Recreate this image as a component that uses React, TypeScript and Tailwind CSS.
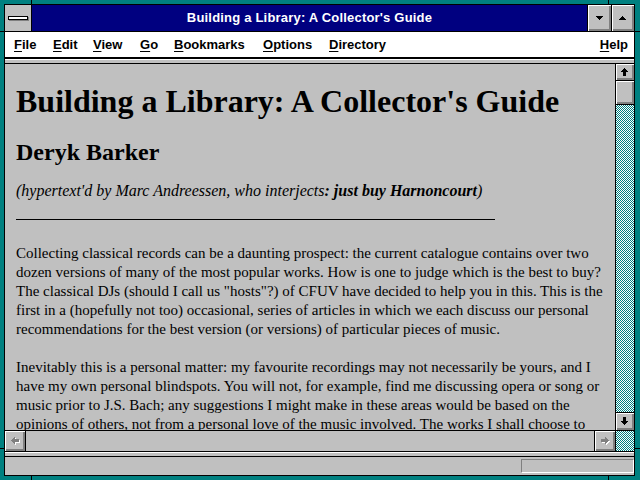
import React from "react";

const serif = "font-['Liberation_Serif','Times_New_Roman',serif]";
const sans = "font-['Liberation_Sans',Arial,sans-serif]";

type Rect = [number, number, number, number];

// pixel arrows, drawn as rows of rects so they stay crisp
const UP: Rect[] = [[3, 0, 1, 1], [2, 1, 3, 1], [1, 2, 5, 1], [0, 3, 7, 1], [2, 4, 3, 4]];
const DOWN: Rect[] = [[2, 0, 3, 4], [0, 4, 7, 1], [1, 5, 5, 1], [2, 6, 3, 1], [3, 7, 1, 1]];
const LEFT: Rect[] = [[0, 3, 1, 1], [1, 2, 1, 3], [2, 1, 1, 5], [3, 0, 1, 7], [4, 2, 4, 3]];
const RIGHT: Rect[] = [[7, 3, 1, 1], [6, 2, 1, 3], [5, 1, 1, 5], [4, 0, 1, 7], [0, 2, 4, 3]];
const TRI_DOWN: Rect[] = [[0, 0, 7, 1], [1, 1, 5, 1], [2, 2, 3, 1], [3, 3, 1, 1]];
const TRI_UP: Rect[] = [[3, 0, 1, 1], [2, 1, 3, 1], [1, 2, 5, 1], [0, 3, 7, 1]];

function Glyph({ rects, w, h, color = "#000", disabled = false }: { rects: Rect[]; w: number; h: number; color?: string; disabled?: boolean }) {
  return (
    <svg width={w + 1} height={h + 1} viewBox={`0 0 ${w + 1} ${h + 1}`} shapeRendering="crispEdges">
      {disabled &&
        rects.map(([x, y, rw, rh], i) => <rect key={"s" + i} x={x + 1} y={y + 1} width={rw} height={rh} fill="#ffffff" />)}
      {rects.map(([x, y, rw, rh], i) => (
        <rect key={i} x={x} y={y} width={rw} height={rh} fill={disabled ? "#808080" : color} />
      ))}
    </svg>
  );
}

const bevel =
  "bg-[#c0c0c0] shadow-[inset_1px_1px_0_#ffffff,inset_-1px_-1px_0_#808080,inset_-2px_-2px_0_#808080] flex items-center justify-center";

const checker =
  "bg-[conic-gradient(#008080_90deg,#ffffff_90deg_180deg,#008080_180deg_270deg,#ffffff_270deg)] bg-[length:2px_2px]";

function TitleBar() {
  return (
    <div className="h-[27px] flex border-b border-black shrink-0">
      <div className="w-[27px] border-r border-black bg-[#c0c0c0] flex items-center justify-center">
        <div className="w-[20px] h-[4px] border border-black bg-white shadow-[1px_1px_0_#808080] -mt-[1px]" />
      </div>
      <div className={`flex-1 bg-[#000080] text-white text-[13px] tracking-[0.2px] font-bold flex items-center justify-center ${sans}`}>
        Building a Library: A Collector's Guide
      </div>
      <div className={`w-[24px] border-l border-black ${bevel}`}>
        <Glyph rects={TRI_DOWN} w={7} h={4} />
      </div>
      <div className={`w-[23px] border-l border-black ${bevel}`}>
        <Glyph rects={TRI_UP} w={7} h={4} />
      </div>
    </div>
  );
}

const menus: { label: string; w: string }[] = [
  { label: "File", w: "w-[39px]" },
  { label: "Edit", w: "w-[40px]" },
  { label: "View", w: "w-[47px]" },
  { label: "Go", w: "w-[34px]" },
  { label: "Bookmarks", w: "w-[89px]" },
  { label: "Options", w: "w-[66px]" },
  { label: "Directory", w: "w-[80px]" },
];

function MenuLabel({ label }: { label: string }) {
  return (
    <span>
      <span className="underline underline-offset-[2px]">{label[0]}</span>
      {label.slice(1)}
    </span>
  );
}

function MenuBar() {
  return (
    <div className={`h-[26px] bg-white border-b border-black flex items-center pl-[9px] pr-[6px] text-[13px] font-bold text-black shrink-0 ${sans}`}>
      {menus.map((m) => (
        <div key={m.label} className={`${m.w} shrink-0`}>
          <MenuLabel label={m.label} />
        </div>
      ))}
      <div className="flex-1" />
      <MenuLabel label="Help" />
    </div>
  );
}

const para1 = [
  "Collecting classical records can be a daunting prospect: the current catalogue contains over two",
  "dozen versions of many of the most popular works. How is one to judge which is the best to buy?",
  "The classical DJs (should I call us \"hosts\"?) of CFUV have decided to help you in this. This is the",
  "first in a (hopefully not too) occasional, series of articles in which we each discuss our personal",
  "recommendations for the best version (or versions) of particular pieces of music.",
];

const para2 = [
  "Inevitably this is a personal matter: my favourite recordings may not necessarily be yours, and I",
  "have my own personal blindspots. You will not, for example, find me discussing opera or song or",
  "music prior to J.S. Bach; any suggestions I might make in these areas would be based on the",
  "opinions of others, not from a personal love of the music involved. The works I shall choose to",
];

function Content() {
  return (
    <div className={`flex-1 overflow-hidden pl-[11px] text-black ${serif}`}>
      <h1 className="mt-[19px] text-[32px] leading-[37px] font-bold whitespace-nowrap">
        Building a Library: A Collector's Guide
      </h1>
      <h2 className="mt-[18px] text-[24px] leading-[28px] font-bold">Deryk Barker</h2>
      <p className="mt-[15px] text-[16px] leading-[19px] italic whitespace-nowrap">
        (hypertext'd by Marc Andreessen, who interjects<b>: just buy Harnoncourt</b>)
      </p>
      <div className="mt-[19px] w-[479px] h-px bg-black" />
      <div className="mt-[24px] text-[15px] leading-[19px] whitespace-nowrap">
        {para1.map((l) => (
          <div key={l}>{l}</div>
        ))}
      </div>
      <div className="mt-[19px] text-[15px] leading-[19px] whitespace-nowrap">
        {para2.map((l) => (
          <div key={l}>{l}</div>
        ))}
      </div>
    </div>
  );
}

function VScroll() {
  return (
    <div className="w-[19px] border-l border-black flex flex-col shrink-0">
      <div className={`h-[17px] border-b border-black ${bevel}`}>
        <Glyph rects={UP} w={7} h={8} />
      </div>
      <div className={`h-[24px] border-b border-black ${bevel}`} />
      <div className={`flex-1 ${checker}`} />
      <div className={`h-[18px] border-t border-black ${bevel}`}>
        <Glyph rects={DOWN} w={7} h={8} />
      </div>
    </div>
  );
}

function HScroll() {
  return (
    <div className="h-[22px] border-y border-black flex shrink-0">
      <div className={`w-[21px] border-r border-black ${bevel}`}>
        <Glyph rects={LEFT} w={8} h={7} disabled />
      </div>
      <div className="flex-1 bg-[#c0c0c0]" />
      <div className={`w-[21px] border-l border-black ${bevel}`}>
        <Glyph rects={RIGHT} w={8} h={7} disabled />
      </div>
      <div className={`w-[19px] border-l border-black ${checker}`} />
    </div>
  );
}

function StatusBar() {
  return (
    <div className="h-[18px] bg-[#c0c0c0] flex items-center justify-end shrink-0">
      <div className="w-[113px] h-[14px] border-t border-l border-[#808080] border-b border-r border-b-white border-r-white" />
    </div>
  );
}

export default function App() {
  return (
    <div className="relative w-[640px] h-[480px] bg-[#008080] pt-[4px] pb-[4px] pl-[4px] pr-[5px]">
      {/* resize segments on the frame */}
      <div className="absolute left-[31px] top-0 w-px h-[4px] bg-black" />
      <div className="absolute left-[608px] top-0 w-px h-[4px] bg-black" />
      <div className="absolute left-[31px] bottom-0 w-px h-[4px] bg-black" />
      <div className="absolute left-[608px] bottom-0 w-px h-[4px] bg-black" />
      <div className="absolute left-0 top-[31px] w-[4px] h-px bg-black" />
      <div className="absolute left-0 top-[448px] w-[4px] h-px bg-black" />
      <div className="absolute right-0 top-[31px] w-[5px] h-px bg-black" />
      <div className="absolute right-0 top-[448px] w-[5px] h-px bg-black" />

      <div className="w-full h-full border border-black flex flex-col bg-[#c0c0c0]">
        <TitleBar />
        <MenuBar />
        <div className="h-[6px] border-y border-black bg-[#c0c0c0] shadow-[inset_0_1px_0_#ffffff] shrink-0" />
        <div className="flex h-[366px] shrink-0">
          <Content />
          <VScroll />
        </div>
        <HScroll />
        <div className="h-[5px] border-b border-black bg-[#c0c0c0] shadow-[inset_0_1px_0_#ffffff] shrink-0" />
        <StatusBar />
      </div>
    </div>
  );
}
